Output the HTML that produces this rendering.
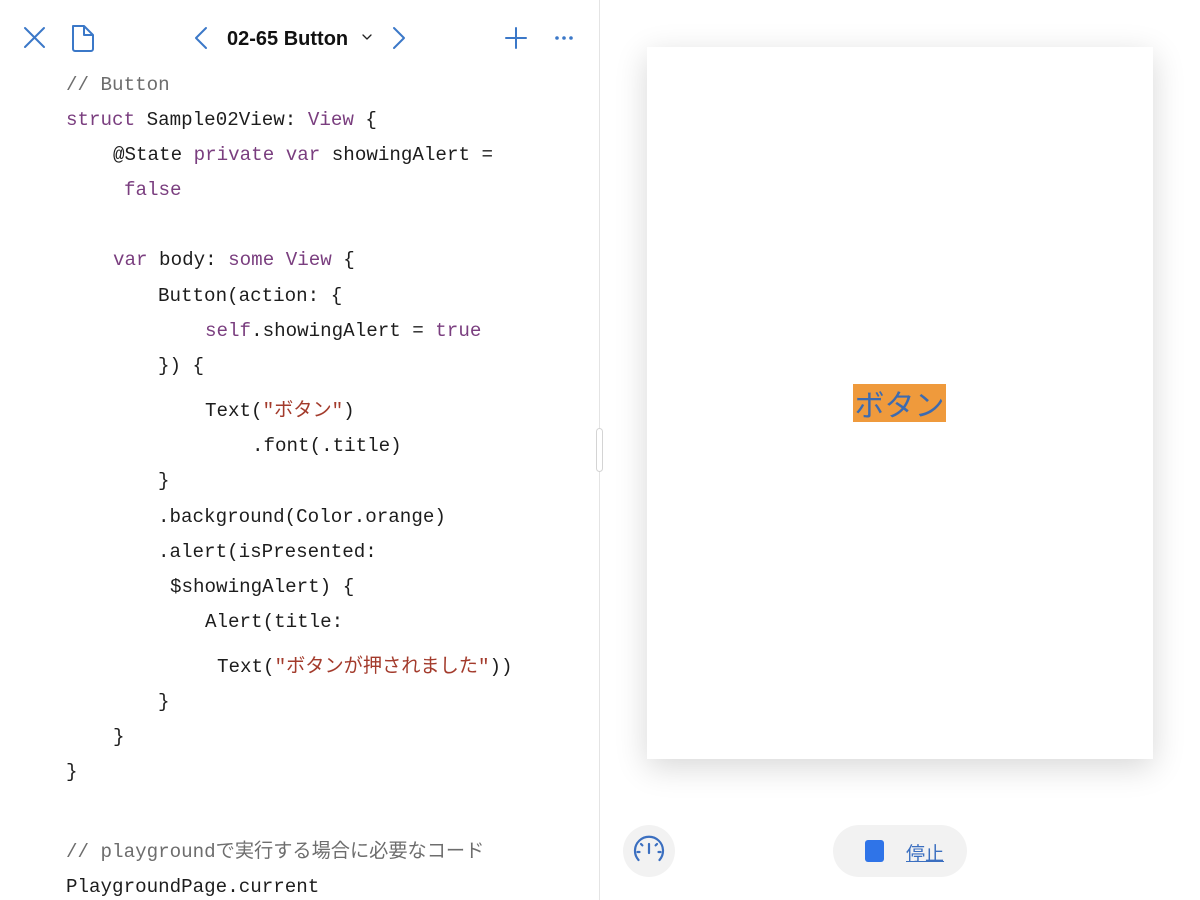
<!DOCTYPE html>
<html><head><meta charset="utf-8"><style>
*{margin:0;padding:0}
body{width:1200px;height:900px;background:#fff;position:relative;overflow:hidden;font-family:"Liberation Sans","Noto Sans CJK JP",sans-serif}
.l{position:absolute;font-family:"Liberation Mono","Noto Sans CJK JP",monospace;font-size:19.2px;color:#1d1d1d;white-space:pre;line-height:24px}
.k{color:#7a3e7f}.c{color:#6d6d6d}.s{color:#a33b2c}
.divider{position:absolute;left:599px;top:0;width:1px;height:900px;background:#e4e4e4}
.handle{position:absolute;left:596px;top:428px;width:7px;height:44px;border-radius:4px;background:#fff;border:1px solid #d4d4d4;box-sizing:border-box}
.card{position:absolute;left:647px;top:47px;width:506px;height:712px;background:#fff;box-shadow:0 8px 30px rgba(0,0,0,.16)}
</style></head><body>
<svg style="position:absolute;left:0;top:0" width="600" height="70">
<g stroke="#3b78c8" stroke-width="2" fill="none" stroke-linecap="round" stroke-linejoin="round">
<path d="M25 28L44 47M44 28L25 47"/>
<path d="M73 26h11l9 9v14a2 2 0 0 1-2 2H75a2 2 0 0 1-2-2z M84 26v9h9"/>
<path d="M206 28L196 38L206 48"/>
<path d="M394 28L404 38L394 48"/>
<path d="M363 35l4 4 4-4" stroke="#222" stroke-width="1.3"/>
<path d="M516 28v20M506 38h20"/>
</g>
<g fill="#3b78c8"><circle cx="557" cy="38" r="1.8"/><circle cx="564" cy="38" r="1.8"/><circle cx="571" cy="38" r="1.8"/></g>
<text x="227" y="45" font-family="Liberation Sans" font-weight="bold" font-size="20" fill="#111">02-65 Button</text>
</svg>
<div class="l c" style="left:66px;top:73px">// Button</div>
<div class="l" style="left:66px;top:108px"><span class="k">struct</span> Sample02View: <span class="k">View</span> {</div>
<div class="l" style="left:113px;top:143px">@State <span class="k">private var</span> showingAlert =</div>
<div class="l k" style="left:124px;top:178px">false</div>
<div class="l" style="left:113px;top:248px"><span class="k">var</span> body: <span class="k">some View</span> {</div>
<div class="l" style="left:158px;top:284px">Button(action: {</div>
<div class="l" style="left:205px;top:319px"><span class="k">self</span>.showingAlert = <span class="k">true</span></div>
<div class="l" style="left:158px;top:354px">}) {</div>
<div class="l" style="left:205px;top:399px">Text(<span class="s">"ボタン"</span>)</div>
<div class="l" style="left:252px;top:434px">.font(.title)</div>
<div class="l" style="left:158px;top:469px">}</div>
<div class="l" style="left:158px;top:505px">.background(Color.orange)</div>
<div class="l" style="left:158px;top:540px">.alert(isPresented:</div>
<div class="l" style="left:170px;top:575px">$showingAlert) {</div>
<div class="l" style="left:205px;top:610px">Alert(title:</div>
<div class="l" style="left:217px;top:655px">Text(<span class="s">"ボタンが押されました"</span>))</div>
<div class="l" style="left:158px;top:690px">}</div>
<div class="l" style="left:113px;top:725px">}</div>
<div class="l" style="left:66px;top:760px">}</div>
<div class="l c" style="left:66px;top:840px">// playgroundで実行する場合に必要なコード</div>
<div class="l" style="left:66px;top:875px">PlaygroundPage.current</div>
<div class="divider"></div><div class="handle"></div>
<div class="card"></div>
<div style="position:absolute;left:853px;top:384px;width:93px;height:38px;background:#ef9a3c;color:#3d6bb0;font-size:30px;line-height:38px;text-align:center;font-family:'Noto Sans CJK JP',sans-serif">ボタン</div>
<div style="position:absolute;left:623px;top:825px;width:52px;height:52px;border-radius:50%;background:#f2f2f2"></div>
<svg style="position:absolute;left:623px;top:825px" width="52" height="52"><g stroke="#3b6fc0" stroke-width="2.2" fill="none" stroke-linecap="round"><path d="M15.5 35A14 14 0 1 1 36.5 35"/><path d="M26 19v9"/><path d="M14.5 27h2M35.5 27h2M18 19l1.4 1.4M34 19l-1.4 1.4"/></g></svg>
<div style="position:absolute;left:833px;top:825px;width:134px;height:52px;border-radius:26px;background:#f2f2f2"></div>
<div style="position:absolute;left:865px;top:840px;width:19px;height:22px;border-radius:3px;background:#2f74e8"></div>
<div style="position:absolute;left:906px;top:839px;font-size:19px;color:#3b6fc0;text-decoration:underline;font-family:'Noto Sans CJK JP',sans-serif">停止</div>
</body></html>
